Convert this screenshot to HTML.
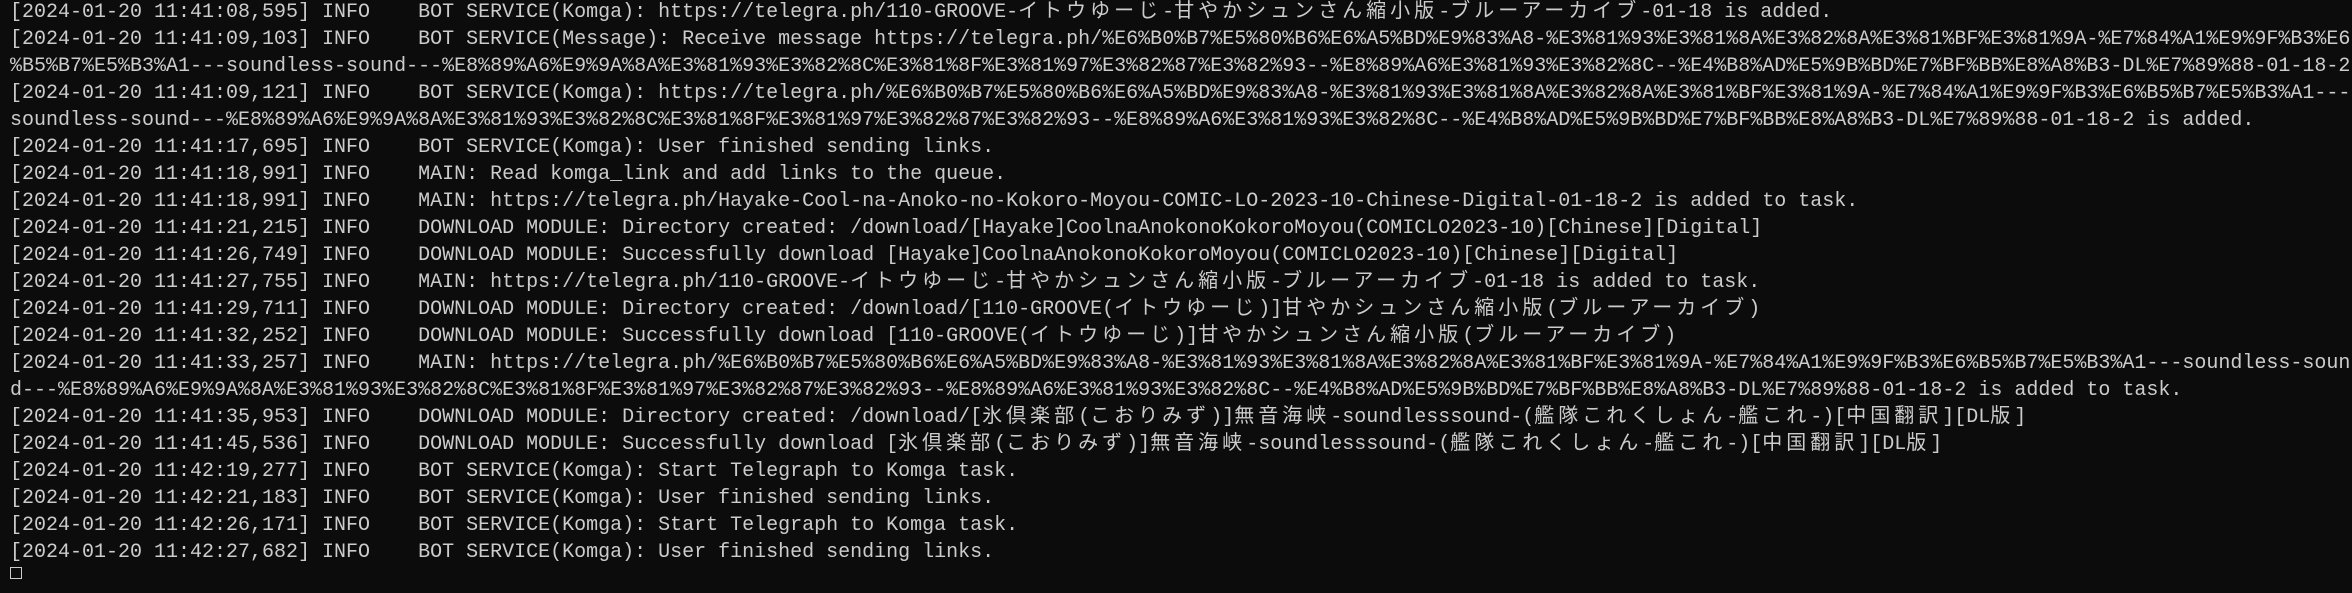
<!DOCTYPE html>
<html><head><meta charset="utf-8"><style>
html,body{margin:0;padding:0;background:#0c0c0c;}
body{width:2352px;height:575px;overflow:hidden;position:relative;}
#t{position:absolute;left:10px;top:-1px;width:2342px;font-family:"Liberation Mono","Noto Sans CJK JP",monospace;font-size:20px;line-height:27px;color:#cccccc;}
#t div{white-space:pre;height:27px;overflow:hidden;}
.w{font-family:"Noto Sans CJK JP","Noto Sans CJK SC",sans-serif;font-size:20px;letter-spacing:4px;line-height:1;}
.cur{display:inline-block;width:10px;height:10px;border:1px solid #cccccc;margin-top:1px;vertical-align:top;}
</style></head><body><div id="t">
<div>[2024-01-20 11:41:08,595] INFO    BOT SERVICE(Komga): https://telegra.ph/110-GROOVE-<span class="w">イトウゆーじ</span>-<span class="w">甘やかシュンさん縮小版</span>-<span class="w">ブルーアーカイブ</span>-01-18 is added.</div>
<div>[2024-01-20 11:41:09,103] INFO    BOT SERVICE(Message): Receive message https://telegra.ph/%E6%B0%B7%E5%80%B6%E6%A5%BD%E9%83%A8-%E3%81%93%E3%81%8A%E3%82%8A%E3%81%BF%E3%81%9A-%E7%84%A1%E9%9F%B3%E6</div>
<div>%B5%B7%E5%B3%A1---soundless-sound---%E8%89%A6%E9%9A%8A%E3%81%93%E3%82%8C%E3%81%8F%E3%81%97%E3%82%87%E3%82%93--%E8%89%A6%E3%81%93%E3%82%8C--%E4%B8%AD%E5%9B%BD%E7%BF%BB%E8%A8%B3-DL%E7%89%88-01-18-2</div>
<div>[2024-01-20 11:41:09,121] INFO    BOT SERVICE(Komga): https://telegra.ph/%E6%B0%B7%E5%80%B6%E6%A5%BD%E9%83%A8-%E3%81%93%E3%81%8A%E3%82%8A%E3%81%BF%E3%81%9A-%E7%84%A1%E9%9F%B3%E6%B5%B7%E5%B3%A1---</div>
<div>soundless-sound---%E8%89%A6%E9%9A%8A%E3%81%93%E3%82%8C%E3%81%8F%E3%81%97%E3%82%87%E3%82%93--%E8%89%A6%E3%81%93%E3%82%8C--%E4%B8%AD%E5%9B%BD%E7%BF%BB%E8%A8%B3-DL%E7%89%88-01-18-2 is added.</div>
<div>[2024-01-20 11:41:17,695] INFO    BOT SERVICE(Komga): User finished sending links.</div>
<div>[2024-01-20 11:41:18,991] INFO    MAIN: Read komga_link and add links to the queue.</div>
<div>[2024-01-20 11:41:18,991] INFO    MAIN: https://telegra.ph/Hayake-Cool-na-Anoko-no-Kokoro-Moyou-COMIC-LO-2023-10-Chinese-Digital-01-18-2 is added to task.</div>
<div>[2024-01-20 11:41:21,215] INFO    DOWNLOAD MODULE: Directory created: /download/[Hayake]CoolnaAnokonoKokoroMoyou(COMICLO2023-10)[Chinese][Digital]</div>
<div>[2024-01-20 11:41:26,749] INFO    DOWNLOAD MODULE: Successfully download [Hayake]CoolnaAnokonoKokoroMoyou(COMICLO2023-10)[Chinese][Digital]</div>
<div>[2024-01-20 11:41:27,755] INFO    MAIN: https://telegra.ph/110-GROOVE-<span class="w">イトウゆーじ</span>-<span class="w">甘やかシュンさん縮小版</span>-<span class="w">ブルーアーカイブ</span>-01-18 is added to task.</div>
<div>[2024-01-20 11:41:29,711] INFO    DOWNLOAD MODULE: Directory created: /download/[110-GROOVE(<span class="w">イトウゆーじ</span>)]<span class="w">甘やかシュンさん縮小版</span>(<span class="w">ブルーアーカイブ</span>)</div>
<div>[2024-01-20 11:41:32,252] INFO    DOWNLOAD MODULE: Successfully download [110-GROOVE(<span class="w">イトウゆーじ</span>)]<span class="w">甘やかシュンさん縮小版</span>(<span class="w">ブルーアーカイブ</span>)</div>
<div>[2024-01-20 11:41:33,257] INFO    MAIN: https://telegra.ph/%E6%B0%B7%E5%80%B6%E6%A5%BD%E9%83%A8-%E3%81%93%E3%81%8A%E3%82%8A%E3%81%BF%E3%81%9A-%E7%84%A1%E9%9F%B3%E6%B5%B7%E5%B3%A1---soundless-soun</div>
<div>d---%E8%89%A6%E9%9A%8A%E3%81%93%E3%82%8C%E3%81%8F%E3%81%97%E3%82%87%E3%82%93--%E8%89%A6%E3%81%93%E3%82%8C--%E4%B8%AD%E5%9B%BD%E7%BF%BB%E8%A8%B3-DL%E7%89%88-01-18-2 is added to task.</div>
<div>[2024-01-20 11:41:35,953] INFO    DOWNLOAD MODULE: Directory created: /download/[<span class="w">氷倶楽部</span>(<span class="w">こおりみず</span>)]<span class="w">無音海峡</span>-soundlesssound-(<span class="w">艦隊これくしょん</span>-<span class="w">艦これ</span>-)[<span class="w">中国翻訳</span>][DL<span class="w">版</span>]</div>
<div>[2024-01-20 11:41:45,536] INFO    DOWNLOAD MODULE: Successfully download [<span class="w">氷倶楽部</span>(<span class="w">こおりみず</span>)]<span class="w">無音海峡</span>-soundlesssound-(<span class="w">艦隊これくしょん</span>-<span class="w">艦これ</span>-)[<span class="w">中国翻訳</span>][DL<span class="w">版</span>]</div>
<div>[2024-01-20 11:42:19,277] INFO    BOT SERVICE(Komga): Start Telegraph to Komga task.</div>
<div>[2024-01-20 11:42:21,183] INFO    BOT SERVICE(Komga): User finished sending links.</div>
<div>[2024-01-20 11:42:26,171] INFO    BOT SERVICE(Komga): Start Telegraph to Komga task.</div>
<div>[2024-01-20 11:42:27,682] INFO    BOT SERVICE(Komga): User finished sending links.</div>
<div><span class="cur"></span></div>
</div></body></html>
